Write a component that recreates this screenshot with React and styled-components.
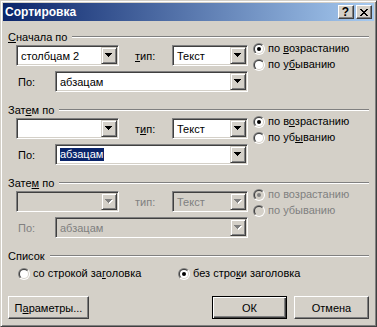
import React from 'react';
import styled, { createGlobalStyle } from 'styled-components';

const Global = createGlobalStyle`
  html, body { margin: 0; padding: 0; background: #d4d0c8; }
  body { font-family: "Liberation Sans", Arial, sans-serif; font-size: 11px; color: #000; }
  #root { width: 377px; height: 327px; }
`;

const Window = styled.div`
  box-sizing: border-box;
  width: 377px;
  height: 327px;
  background: #d4d0c8;
  border: 1px solid;
  border-color: #d4d0c8 #404040 #404040 #d4d0c8;
  box-shadow: inset 1px 1px #fff, inset -1px -1px #808080;
  padding: 2px;
  display: flex;
  flex-direction: column;
`;

const TitleBar = styled.div`
  height: 18px;
  flex: none;
  display: flex;
  align-items: center;
  padding: 0 2px;
  background: linear-gradient(to right, #0a246a, #a6caf0);
  color: #fff;
  font-weight: bold;
  font-size: 12px;
`;

const TitleText = styled.span`
  flex: 1;
  line-height: 14px;
`;

const CaptionButtons = styled.div`
  display: flex;
  gap: 2px;
`;

const CaptionButton = styled.div`
  box-sizing: border-box;
  width: 16px;
  height: 14px;
  background: #d4d0c8;
  border: 1px solid;
  border-color: #fff #404040 #404040 #fff;
  box-shadow: inset -1px -1px #808080;
  display: flex;
  align-items: center;
  justify-content: center;
  color: #000;
  font-weight: bold;
  font-size: 12px;
  line-height: 11px;
  padding-right: 1px;
`;

const Body = styled.div`
  flex: 1;
  display: flex;
  flex-direction: column;
  padding: 9px 5px 0 5px;
`;

const Section = styled.div`
  display: flex;
  flex-direction: column;
  & + & { margin-top: 11px; }
`;

const Header = styled.div`
  display: flex;
  align-items: center;
  height: 14px;
  line-height: 14px;
`;

const HeaderLine = styled.div`
  flex: 1;
  height: 0;
  border-top: 1px solid #808080;
  border-bottom: 1px solid #fff;
  margin-left: 5px;
`;

const Key = styled.span`
  text-decoration: underline;
  text-underline-offset: 1px;
`;

const SectionBody = styled.div`
  display: flex;
  margin-top: 1px;
`;

const Fields = styled.div`
  display: flex;
  flex-direction: column;
  gap: 5px;
`;

const Row = styled.div`
  display: flex;
  align-items: center;
  height: 21px;
`;

const FieldLabel = styled.span`
  box-sizing: border-box;
  width: ${p => p.$w}px;
  margin-left: ${p => p.$ml || 0}px;
  color: ${p => (p.$disabled ? '#808080' : '#000')};
  white-space: nowrap;
`;

const ComboBox = styled.div`
  box-sizing: border-box;
  width: ${p => p.$w}px;
  height: 21px;
  margin-left: ${p => p.$ml || 0}px;
  display: flex;
  padding: 1px;
  border: 1px solid;
  border-color: #808080 #fff #fff #808080;
  box-shadow: inset 1px 1px #404040, inset -1px -1px #d4d0c8;
  background: ${p => (p.$disabled ? '#d4d0c8' : '#fff')};
`;

const ComboText = styled.div`
  flex: 1;
  display: flex;
  align-items: center;
  padding-left: 3px;
  color: ${p => (p.$disabled ? '#808080' : '#000')};
  white-space: nowrap;
  overflow: hidden;
`;

const Selection = styled.span`
  background: #0a246a;
  color: #fff;
  line-height: 13px;
  padding: 0 1px 0 0;
`;

const DropButton = styled.div`
  box-sizing: border-box;
  width: 16px;
  height: 17px;
  flex: none;
  background: #d4d0c8;
  border: 1px solid;
  border-color: #d4d0c8 #404040 #404040 #d4d0c8;
  box-shadow: inset 1px 1px #fff, inset -1px -1px #808080;
  display: flex;
  align-items: center;
  justify-content: center;
`;

const RadioColumn = styled.div`
  display: flex;
  flex-direction: column;
  gap: 3px;
  margin-left: 5px;
  margin-top: -3px;
`;

const RadioItem = styled.div`
  display: flex;
  align-items: center;
  gap: 3px;
  height: 13px;
  line-height: 13px;
  white-space: nowrap;
  color: ${p => (p.$disabled ? '#808080' : '#000')};
`;

const RadioOuter = styled.span`
  flex: none;
  width: 12px;
  height: 12px;
  border-radius: 50%;
  background: linear-gradient(135deg, #808080 50%, #fff 50%);
  display: flex;
  align-items: center;
  justify-content: center;
`;

const RadioMid = styled.span`
  width: 10px;
  height: 10px;
  border-radius: 50%;
  background: linear-gradient(135deg, #404040 50%, #d4d0c8 50%);
  display: flex;
  align-items: center;
  justify-content: center;
`;

const RadioInner = styled.span`
  width: 8px;
  height: 8px;
  border-radius: 50%;
  background: ${p => (p.$disabled ? '#d4d0c8' : '#fff')};
  display: flex;
  align-items: center;
  justify-content: center;
`;

const RadioDot = styled.span`
  width: 4px;
  height: 4px;
  border-radius: 50%;
  background: ${p => (p.$disabled ? '#808080' : '#000')};
`;

const ListRow = styled.div`
  display: grid;
  grid-template-columns: 160px auto;
  padding-left: 10px;
  margin-top: 4px;
`;

const ButtonRow = styled.div`
  display: flex;
  margin-top: 16px;
  gap: 7px;
`;

const PushButton = styled.div`
  box-sizing: border-box;
  width: ${p => p.$w}px;
  height: 23px;
  margin-left: ${p => (p.$push ? 'auto' : '0')};
  display: flex;
  align-items: center;
  justify-content: center;
  background: #d4d0c8;
  border: 1px solid;
  border-color: ${p => (p.$default ? '#000' : '#fff #404040 #404040 #fff')};
  box-shadow: ${p =>
    p.$default
      ? 'inset 1px 1px #fff, inset -1px -1px #404040, inset -2px -2px #808080'
      : 'inset -1px -1px #808080'};
  white-space: nowrap;
`;

const Arrow = ({ disabled }) => (
  <svg width="8" height="5" viewBox="0 0 8 5" shapeRendering="crispEdges">
    {disabled && <path d="M1 1h7v1h-1v1h-1v1h-1v1h-1v-1h-1v-1h-1v-1h-1z" fill="#fff" />}
    <path d="M0 0h7v1h-1v1h-1v1h-1v1h-1v-1h-1v-1h-1v-1h-1z" fill={disabled ? '#808080' : '#000'} />
  </svg>
);

const CloseGlyph = () => (
  <svg width="8" height="7" viewBox="0 0 8 7" shapeRendering="crispEdges">
    <path
      d="M0 0h2v1h1v1h2v-1h1v-1h2v1h-1v1h-1v1h-1v1h1v1h1v1h1v1h-2v-1h-1v-1h-2v1h-1v1h-2v-1h1v-1h1v-1h1v-1h-1v-1h-1v-1h-1z"
      fill="#000"
    />
  </svg>
);

const Combo = ({ w, ml, disabled, children }) => (
  <ComboBox $w={w} $ml={ml} $disabled={disabled}>
    <ComboText $disabled={disabled}>{children}</ComboText>
    <DropButton>
      <Arrow disabled={disabled} />
    </DropButton>
  </ComboBox>
);

const Radio = ({ checked, disabled, children }) => (
  <RadioItem $disabled={disabled}>
    <RadioOuter>
      <RadioMid>
        <RadioInner $disabled={disabled}>{checked && <RadioDot $disabled={disabled} />}</RadioInner>
      </RadioMid>
    </RadioOuter>
    <span>{children}</span>
  </RadioItem>
);

const SortGroup = ({ title, column, typeLabel, by, asc, desc, disabled }) => (
  <Section>
    <Header>
      <span>{title}</span>
      <HeaderLine />
    </Header>
    <SectionBody>
      <Fields>
        <Row>
          <Combo w={103} ml={8} disabled={disabled}>{column}</Combo>
          <FieldLabel $w={37} $ml={16} $disabled={disabled}>{typeLabel}</FieldLabel>
          <Combo w={76} disabled={disabled}>Текст</Combo>
        </Row>
        <Row>
          <FieldLabel $w={37} $ml={10} $disabled={disabled}>По:</FieldLabel>
          <Combo w={193} disabled={disabled}>{by}</Combo>
        </Row>
      </Fields>
      <RadioColumn>
        <Radio checked disabled={disabled}>{asc}</Radio>
        <Radio disabled={disabled}>{desc}</Radio>
      </RadioColumn>
    </SectionBody>
  </Section>
);

export default function App() {
  return (
    <>
      <Global />
      <Window>
        <TitleBar>
          <TitleText>Сортировка</TitleText>
          <CaptionButtons>
            <CaptionButton>?</CaptionButton>
            <CaptionButton>
              <CloseGlyph />
            </CaptionButton>
          </CaptionButtons>
        </TitleBar>
        <Body>
          <SortGroup
            title={<><Key>С</Key>начала по</>}
            column="столбцам 2"
            typeLabel={<><Key>т</Key>ип:</>}
            by="абзацам"
            asc={<>по <Key>в</Key>озрастанию</>}
            desc={<>по у<Key>б</Key>ыванию</>}
          />
          <SortGroup
            title={<>Зат<Key>е</Key>м по</>}
            column=""
            typeLabel={<>т<Key>и</Key>п:</>}
            by={<Selection>абзацам</Selection>}
            asc={<>по в<Key>о</Key>зрастанию</>}
            desc={<>по уб<Key>ы</Key>ванию</>}
          />
          <SortGroup
            title={<>Зате<Key>м</Key> по</>}
            column=""
            typeLabel="тип:"
            by="абзацам"
            asc="по возрастанию"
            desc="по убыванию"
            disabled
          />
          <Section>
            <Header>
              <span>Список</span>
              <HeaderLine />
            </Header>
            <ListRow>
              <Radio>со строкой за<Key>г</Key>оловка</Radio>
              <Radio checked>без стро<Key>к</Key>и заголовка</Radio>
            </ListRow>
          </Section>
          <ButtonRow>
            <PushButton $w={81}>П<Key>а</Key>раметры...</PushButton>
            <PushButton $w={75} $push $default>ОК</PushButton>
            <PushButton $w={75}>Отмена</PushButton>
          </ButtonRow>
        </Body>
      </Window>
    </>
  );
}
